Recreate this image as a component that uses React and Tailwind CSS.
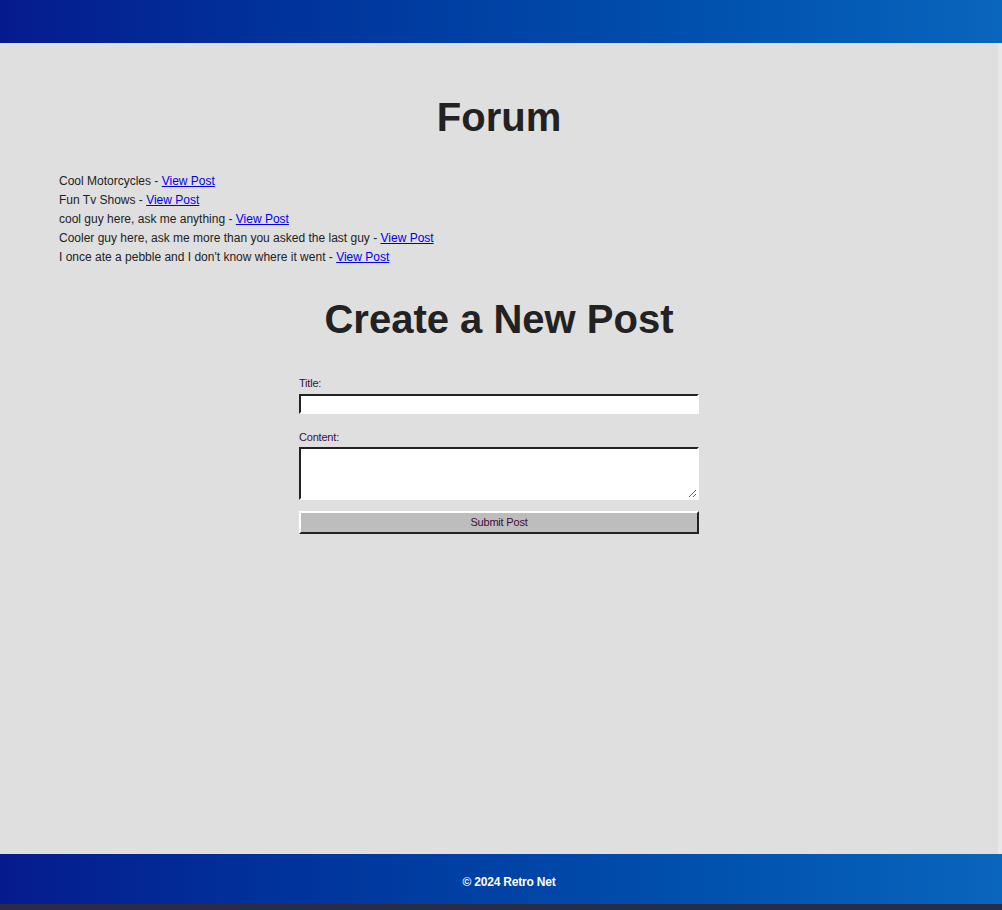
import React from 'react';

const posts = [
  'Cool Motorcycles',
  'Fun Tv Shows',
  'cool guy here, ask me anything',
  'Cooler guy here, ask me more than you asked the last guy',
  "I once ate a pebble and I don't know where it went",
];

function App() {
  return (
    <div className="h-[910px] flex flex-col bg-[#dfdfdf] text-[#222] font-['Liberation_Sans',Arial,sans-serif] overflow-hidden">
      {/* Header */}
      <div className="h-[43px] shrink-0 bg-gradient-to-r from-[#061a8e] to-[#0a65bc]"></div>

      {/* Main */}
      <div className="flex-1 flex">
        <div className="flex-1 px-[59px] pt-[50px]">
          <h1 className="text-center text-[40px] font-bold leading-[48px]">Forum</h1>

          <ul className="mt-[31px] text-[12px] leading-[19px]">
            {posts.map((p) => (
              <li key={p}>
                {p} - <a href="#" className="text-[#0000ee] underline">View Post</a>
              </li>
            ))}
          </ul>

          <h2 className="mt-[28px] text-center text-[40px] font-bold leading-[48px]">Create a New Post</h2>

          <form className="mx-auto mt-[33px] w-[400px] flex flex-col text-[11px] text-[#3a1038]">
            <label className="leading-[14px] mb-[4px] tracking-[-0.2px]">Title:</label>
            <input
              type="text"
              className="h-[20px] bg-white border-2 border-t-[#222] border-l-[#222] border-b-white border-r-white outline-none"
            />
            <label className="mt-[16px] leading-[14px] mb-[3px] tracking-[-0.2px]">Content:</label>
            <textarea className="h-[53px] bg-white border-2 border-t-[#222] border-l-[#222] border-b-white border-r-white outline-none"></textarea>
            <button
              type="button"
              className="mt-[11px] h-[23px] bg-[#bdbdbd] border-2 border-t-white border-l-white border-b-[#222] border-r-[#222] text-[11px] text-[#3a1038] tracking-[-0.2px]"
            >
              Submit Post
            </button>
          </form>
        </div>
        <div className="w-[4px] bg-[#e8e8e8]"></div>
      </div>

      {/* Footer */}
      <div className="h-[50px] shrink-0 bg-gradient-to-r from-[#061a8e] to-[#0a65bc] flex items-center justify-center pl-[16px] pt-[6px]">
        <span className="text-white text-[12px] font-bold tracking-[-0.2px]">© 2024 Retro Net</span>
      </div>
      <div className="h-[6px] shrink-0 bg-[#2a2c44]"></div>
    </div>
  );
}

export default App;
